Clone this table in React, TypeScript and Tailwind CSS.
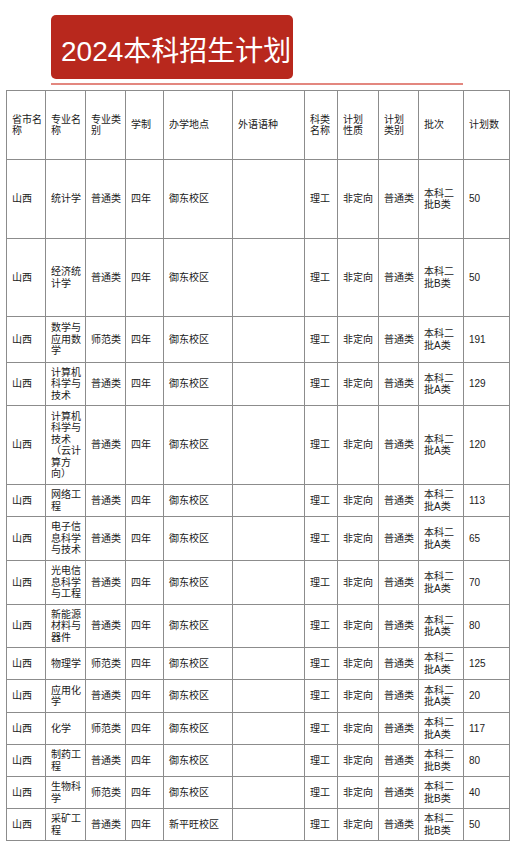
// 2024本科招生计划 表格页
type Row = {
  name: string[];
  kind: string;
  campus: string;
  batch: string;
  count: string;
  h: number;
};

const colWidths = [39, 40, 40, 38, 69, 72, 33, 41, 40, 45, 46];

const headers: string[][] = [
  ['省市名', '称'],
  ['专业名', '称'],
  ['专业类', '别'],
  ['学制'],
  ['办学地点'],
  ['外语语种'],
  ['科类', '名称'],
  ['计划', '性质'],
  ['计划', '类别'],
  ['批次'],
  ['计划数'],
];

const rows: Row[] = [
  { name: ['统计学'], kind: '普通类', campus: '御东校区', batch: 'B', count: '50', h: 79 },
  { name: ['经济统', '计学'], kind: '普通类', campus: '御东校区', batch: 'B', count: '50', h: 78 },
  { name: ['数学与', '应用数', '学'], kind: '师范类', campus: '御东校区', batch: 'A', count: '191', h: 46 },
  { name: ['计算机', '科学与', '技术'], kind: '普通类', campus: '御东校区', batch: 'A', count: '129', h: 43 },
  { name: ['计算机', '科学与', '技术', '（云计', '算方', '向）'], kind: '普通类', campus: '御东校区', batch: 'A', count: '120', h: 79 },
  { name: ['网络工', '程'], kind: '普通类', campus: '御东校区', batch: 'A', count: '113', h: 32 },
  { name: ['电子信', '息科学', '与技术'], kind: '普通类', campus: '御东校区', batch: 'A', count: '65', h: 44 },
  { name: ['光电信', '息科学', '与工程'], kind: '普通类', campus: '御东校区', batch: 'A', count: '70', h: 44 },
  { name: ['新能源', '材料与', '器件'], kind: '普通类', campus: '御东校区', batch: 'A', count: '80', h: 43 },
  { name: ['物理学'], kind: '师范类', campus: '御东校区', batch: 'A', count: '125', h: 32 },
  { name: ['应用化', '学'], kind: '普通类', campus: '御东校区', batch: 'A', count: '20', h: 33 },
  { name: ['化学'], kind: '师范类', campus: '御东校区', batch: 'A', count: '117', h: 32 },
  { name: ['制药工', '程'], kind: '普通类', campus: '御东校区', batch: 'B', count: '80', h: 32 },
  { name: ['生物科', '学'], kind: '师范类', campus: '御东校区', batch: 'B', count: '40', h: 32 },
  { name: ['采矿工', '程'], kind: '普通类', campus: '新平旺校区', batch: 'B', count: '50', h: 32 },
];

function Lines({ lines }: { lines: string[] }) {
  return (
    <>
      {lines.map((l, i) => (
        <div key={i} className="whitespace-nowrap">
          {l}
        </div>
      ))}
    </>
  );
}

const cell = 'border border-[#8c8c8c] pl-[5px] pr-[2px] align-middle text-left font-normal overflow-hidden';

export default function App() {
  return (
    <div className="min-h-[846px] bg-white font-[Liberation_Sans,Noto_Sans_CJK_SC,sans-serif] text-[#1a1a1a]">
      {/* 标题 */}
      <div className="ml-[51px] pt-[15px]">
        <div className="h-[64px] w-[242px] rounded-[5px] bg-[#b8281d] pl-[10px] pt-[20px] text-[28px] leading-[1.2] text-white whitespace-nowrap">
          2024本科招生计划
        </div>
        <div className="mt-[4px] h-[2px] w-[412px] bg-[#e3877f]" />
      </div>

      {/* 表格 */}
      <table className="ml-[6px] mt-[5px] w-[503px] table-fixed border-collapse text-[10px] leading-[11.5px]">
        <colgroup>
          {colWidths.map((w, i) => (
            <col key={i} style={{ width: w }} />
          ))}
        </colgroup>
        <thead>
          <tr className="h-[69px]">
            {headers.map((h, i) => (
              <th key={i} className={cell}>
                <Lines lines={h} />
              </th>
            ))}
          </tr>
        </thead>
        <tbody>
          {rows.map((r, i) => (
            <tr key={i} style={{ height: r.h }}>
              <td className={cell}>山西</td>
              <td className={cell}>
                <Lines lines={r.name} />
              </td>
              <td className={cell}>{r.kind}</td>
              <td className={cell}>四年</td>
              <td className={cell}>{r.campus}</td>
              <td className={cell}></td>
              <td className={cell}>理工</td>
              <td className={cell}>非定向</td>
              <td className={cell}>普通类</td>
              <td className={cell}>
                <Lines lines={['本科二', `批${r.batch}类`]} />
              </td>
              <td className={cell}>{r.count}</td>
            </tr>
          ))}
        </tbody>
      </table>
    </div>
  );
}
